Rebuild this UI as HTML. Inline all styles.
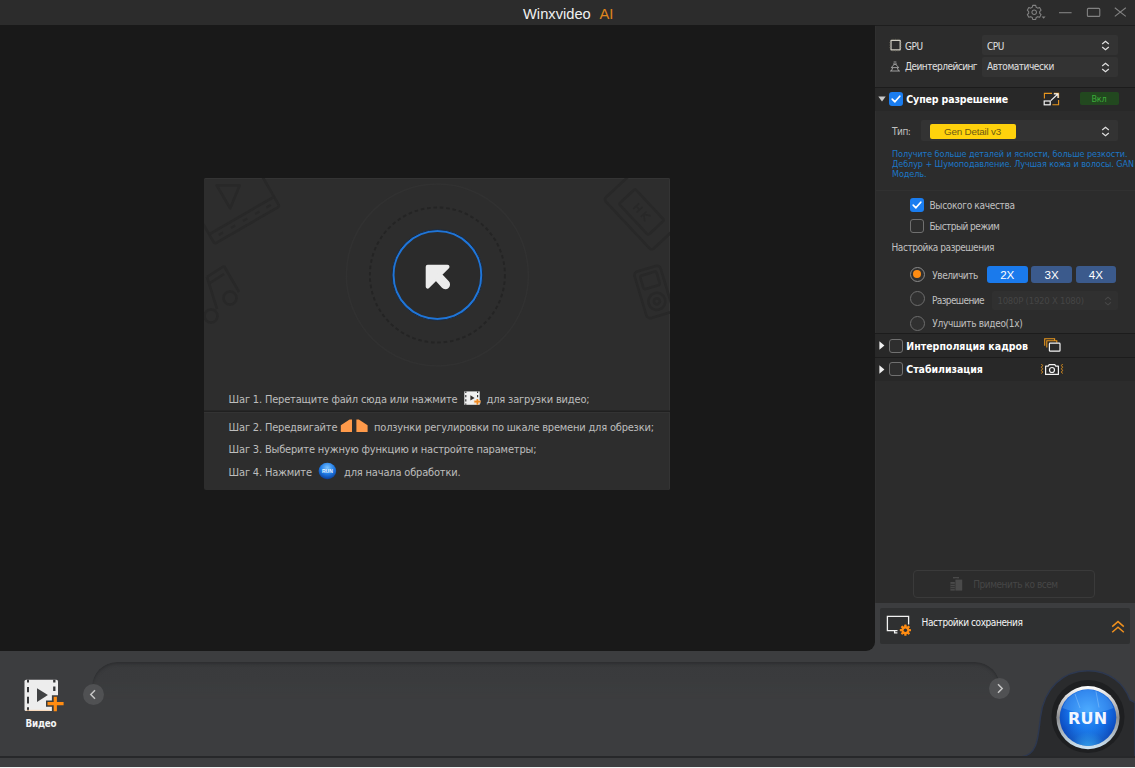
<!DOCTYPE html>
<html lang="ru">
<head>
<meta charset="utf-8">
<title>Winxvideo AI</title>
<style>
*{box-sizing:border-box;margin:0;padding:0}
html,body{width:1135px;height:768px;overflow:hidden}
body{position:relative;background:#3c3d3f;font-family:"Liberation Sans","DejaVu Sans",sans-serif;color:#d6d6d6}
.abs{position:absolute}
.tx{position:absolute;white-space:nowrap;line-height:1}
/* fonts */
.tah{font-family:"DejaVu Sans Condensed","DejaVu Sans","Liberation Sans",sans-serif;font-size:10px;letter-spacing:-0.45px;color:#c0c0c0}
.tahb{font-family:"DejaVu Sans Condensed","DejaVu Sans","Liberation Sans",sans-serif;font-weight:bold;font-size:10.5px;color:#fff}
.step{font-family:"DejaVu Sans Condensed","DejaVu Sans","Liberation Sans",sans-serif;font-size:11px;letter-spacing:-0.18px;color:#bdbdbd}
#title{left:0;top:0;width:1135px;height:25px;background:#2c2c2c}
#main{left:0;top:25px;width:875px;height:626px;background:#191919;border-bottom-right-radius:9px}
#right{left:875px;top:25px;width:260px;height:578px;background:#2c2c2c}
.hdr{left:0;width:260px;background:#282828}
.sep{left:0;width:260px;height:1px;background:#1c1c1c}
.combo{background:#333333;border-radius:2px}
.cb{width:14px;height:14px;border-radius:3px}
.cb.on{background:#1a7df0}
.cb.off{border:1.5px solid #707070;background:#2e2e2e}
.radio{width:15px;height:15px;border-radius:50%;border:1.5px solid #6d6d6d;background:#303030}
.xbtn{height:17px;border-radius:3px;color:#fff;font-size:11.6px;text-align:center;line-height:17.6px;font-family:"Liberation Sans",sans-serif}
</style>
</head>
<body>
<!-- TITLE BAR -->
<div id="title" class="abs">
  <div class="tx" style="left:523px;top:7px;font-size:14.7px;color:#f0f0f0;">Winxvideo</div>
  <div class="tx" style="left:599.5px;top:7px;font-size:14.7px;color:#e0861c;">AI</div>
  <!-- window icons -->
  <svg class="abs" style="left:1026px;top:4px" width="22" height="17" viewBox="0 0 22 17">
    <g transform="translate(8.2,8.2)" fill="none" stroke="#828282" stroke-width="1.05" stroke-linejoin="round">
      <path d="M-1.5 -6.8h3l0.5 1.9l1.5 0.85l1.9 -0.55l1.5 2.6l-1.4 1.35v1.7l1.4 1.35l-1.5 2.6l-1.9 -0.55l-1.5 0.85l-0.5 1.9h-3l-0.5 -1.9l-1.5 -0.85l-1.9 0.55l-1.5 -2.6l1.4 -1.35v-1.7l-1.4 -1.35l1.5 -2.6l1.9 0.55l1.5 -0.85z"/>
      <circle r="2.3"/>
    </g>
    <path d="M15.6 12.6h4L17.6 14.8z" fill="#828282"/>
  </svg>
  <svg class="abs" style="left:1058px;top:4px" width="72" height="17" viewBox="0 0 72 17">
    <path d="M1 8.7h12.6" stroke="#828282" stroke-width="1.1"/>
    <rect x="29.4" y="4.4" width="12.4" height="8" rx="1" fill="none" stroke="#828282" stroke-width="1.1"/>
    <path d="M56.8 3.8l11 8.6M67.8 3.8l-11 8.6" stroke="#828282" stroke-width="1.1"/>
  </svg>
</div>
<!-- MAIN -->
<div id="main" class="abs">
  <!-- drop panel : page coords x204..670, y178..490 ; main offset top 25 -->
  <div id="drop" class="abs" style="left:204px;top:153px;width:466px;height:312px;background:#2d2d2d;border-radius:2px;overflow:hidden;box-shadow:inset 0 1px 0 #343434, inset -1px 0 0 #343434">
    <svg class="abs" style="left:0;top:0" width="466" height="312" viewBox="0 0 466 312">
      <!-- faint decorative glyphs -->
      <g fill="none" stroke="#282828" stroke-width="2.6" stroke-linejoin="round">
        <g transform="translate(10.6,65.8) rotate(-30)">
          <rect x="0" y="-80" width="75" height="80" rx="2"/>
          <path d="M0 -11h75"/>
          <path d="M8 -5.5h5M22 -5.5h5M36 -5.5h5M50 -5.5h5M63 -5.5h5" stroke-width="2.2"/>
        </g>
        <path d="M12.7 7.4H35.6L26.2 30.3Z"/>
        <path d="M20 88L35 114M20 88L3 99M3 99L13 131M20 96L6 105"/>
        <circle cx="26" cy="120" r="6.5"/>
        <circle cx="7" cy="138" r="6.5"/>
        <g transform="translate(437.6,34) rotate(47)">
          <rect x="-35" y="-60" width="70" height="79" rx="3"/>
          <rect x="-21.4" y="-11" width="42.8" height="22" rx="2"/>
          <path d="M-8 -4v8M-8 0h5M-3 -4v8M3 -4v8M3 0l6 -4M3 0l6 4" stroke-width="1.6"/>
        </g>
        <g transform="translate(449.5,113.9) rotate(-16.8)">
          <rect x="-13.6" y="-24.2" width="27.2" height="48.5" rx="4"/>
          <rect x="-8.5" y="-19" width="17" height="14" rx="2"/>
          <circle cx="0.5" cy="10" r="8.5"/>
          <circle cx="0.5" cy="10" r="3"/>
        </g>
      </g>
      <!-- rings : centre page (437.4,275) => local (233.4,97) -->
      <circle cx="233.4" cy="97" r="91" fill="none" stroke="#313131" stroke-width="1.6"/>
      <circle cx="233.4" cy="97" r="67.5" fill="none" stroke="#242424" stroke-width="1.9" stroke-dasharray="3.6 2.8"/>
      <circle cx="233.4" cy="97" r="44.1" fill="#2b2b2b" stroke="#1f75d8" stroke-width="2.4"/>
      <circle cx="233.4" cy="97" r="45.4" fill="none" stroke="#1b2a3f" stroke-width="1"/>
      <!-- arrow -->
      <path d="M223.7 88.8H243.5L223.7 108.6Z" fill="#ececec" stroke="#ececec" stroke-width="4" stroke-linejoin="round"/>
      <path d="M235.5 100.1L241.4 106.5" stroke="#ececec" stroke-width="9.3" stroke-linecap="round" fill="none"/>
      <!-- separator -->
      <rect x="0" y="232.5" width="466" height="1.6" fill="#202020"/>
      <rect x="0" y="234.1" width="466" height="1" fill="#353535"/>
    </svg>
    <!-- steps (page baselines 402.6, 430.4, 452.7, 476) -->
    <div class="tx step" style="left:24.6px;top:215.6px">Шаг 1. Перетащите файл сюда или нажмите</div>
    <div class="tx step" style="left:282.5px;top:215.6px">для загрузки видео;</div>
    <div class="tx step" style="left:24.6px;top:243.9px">Шаг 2. Передвигайте</div>
    <div class="tx step" style="left:170px;top:243.9px;letter-spacing:-0.2px">ползунки регулировки по шкале времени для обрезки;</div>
    <div class="tx step" style="left:24.6px;top:265.7px">Шаг 3. Выберите нужную функцию и настройте параметры;</div>
    <div class="tx step" style="left:24.6px;top:289px">Шаг 4. Нажмите</div>
    <div class="tx step" style="left:140px;top:289px">для начала обработки.</div>
    <!-- step icons -->
    <svg class="abs" style="left:259.5px;top:212.5px" width="19" height="15" viewBox="0 0 19 15">
      <rect x="0.3" y="0.4" width="15.4" height="13.4" fill="#f0f0f0"/>
      <path d="M1.8 0.4v1.6M1.8 3.9v2.4M1.8 8.2v2.4M1.8 12.4v1.4M13.6 0.4v1.6M13.6 3.9v2.4" stroke="#2a2a2a" stroke-width="1.1"/>
      <path d="M6.4 4.2l4.2 2.7l-4.2 2.7z" fill="#35302e"/>
      <path d="M9.8 9h6.6v3.6h-6.6z" fill="#f3d9c0"/>
      <path d="M10.4 10.7h6.2M13.4 8v5.8" stroke="#ef8a22" stroke-width="1.7"/>
    </svg>
    <svg class="abs" style="left:136px;top:241px" width="30" height="14" viewBox="0 0 30 14">
      <path d="M0.8 13V6.2L9.6 0.6H12V13z" fill="#ff9a4a"/>
      <path d="M16.4 13V0.6h2.4L27.6 6.2V13z" fill="#ff9a4a"/>
    </svg>
    <svg class="abs" style="left:114px;top:284px" width="19" height="18" viewBox="0 0 19 18">
      <defs><radialGradient id="sb" cx="50%" cy="30%" r="70%"><stop offset="0" stop-color="#7cc4ff"/><stop offset="0.55" stop-color="#1f7be6"/><stop offset="1" stop-color="#0a3f9a"/></radialGradient></defs>
      <ellipse cx="9.4" cy="9" rx="8.8" ry="8.2" fill="url(#sb)"/>
      <text x="9.4" y="11" font-family="Liberation Sans, sans-serif" font-weight="bold" font-size="5" fill="#e8f4ff" text-anchor="middle">RUN</text>
    </svg>
  </div>
</div>
<!-- RIGHT PANEL -->
<div id="right" class="abs">
  <div class="abs" style="left:0;top:0;width:260px;height:1px;background:#1e1e1e"></div>
  <div class="abs" style="left:0;top:1px;width:1px;height:577px;background:#303030"></div>
  <!-- GPU rows (page y = local+25) -->
  <svg class="abs" style="left:14px;top:12.8px" width="13" height="14" viewBox="0 0 13 14">
    <rect x="2" y="2.4" width="9.2" height="9.4" rx="0.3" fill="none" stroke="#d0cdc2" stroke-width="1.25"/>
    <path d="M4 0.8v1.2M6.5 0.8v1.2M9 0.8v1.2M4 12.2v1.2M6.5 12.2v1.2M9 12.2v1.2M0.3 4.6h1.2M0.3 7.1h1.2M0.3 9.6h1.2M11.5 4.6h1.2M11.5 7.1h1.2M11.5 9.6h1.2" stroke="#6e6a5c" stroke-width="0.7"/>
  </svg>
  <div class="tx tah" style="left:30px;top:16.6px;color:#e0e0e0">GPU</div>
  <div class="abs combo" style="left:107px;top:10px;width:135.5px;height:19.6px"></div>
  <div class="tx tah" style="left:112px;top:16.6px;color:#e0e0e0">CPU</div>
  <svg class="abs" style="left:13.8px;top:36px" width="12" height="12" viewBox="0 0 12 12">
    <path d="M4.6 1h2.8M4 3h4M2.6 6.2L5.2 3.4h1.6L9.4 6.2M2 6.6h8M1 10h10M2.4 10L3.6 7M9.6 10L8.4 7" stroke="#a8a8a8" stroke-width="0.9" fill="none"/>
  </svg>
  <div class="tx tah" style="left:30px;top:37.3px;color:#e0e0e0;letter-spacing:-0.52px">Деинтерлейсинг</div>
  <div class="abs combo" style="left:107px;top:32px;width:135.5px;height:20px"></div>
  <div class="tx tah" style="left:112px;top:37.3px;color:#e0e0e0">Автоматически</div>
  <svg class="abs" style="left:225.5px;top:15px" width="9" height="11" viewBox="0 0 9 11"><path d="M1.2 4L4.5 1.2L7.8 4M1.2 7L4.5 9.8L7.8 7" fill="none" stroke="#e0e0e0" stroke-width="1.2"/></svg>
  <svg class="abs" style="left:225.5px;top:37px" width="9" height="11" viewBox="0 0 9 11"><path d="M1.2 4L4.5 1.2L7.8 4M1.2 7L4.5 9.8L7.8 7" fill="none" stroke="#e0e0e0" stroke-width="1.2"/></svg>

  <!-- Section 1 header: page y 87..110 -->
  <div class="abs sep" style="top:62px"></div>
  <div class="abs hdr" style="top:63px;height:23px"></div>
  <svg class="abs" style="left:3px;top:70.5px" width="8" height="6" viewBox="0 0 8 6"><path d="M0.3 0.5h7.4L4 5.4z" fill="#c8c8c8"/></svg>
  <div class="abs cb on" style="left:14px;top:67px"></div>
  <svg class="abs" style="left:14px;top:67px" width="14" height="14" viewBox="0 0 14 14"><path d="M3.2 7.2L5.9 9.8L10.8 4.2" fill="none" stroke="#fff" stroke-width="1.7" stroke-linecap="round" stroke-linejoin="round"/></svg>
  <div class="tx tahb" style="left:31.3px;top:69.3px;letter-spacing:-0.13px">Супер разрешение</div>
  <svg class="abs" style="left:168px;top:67px" width="17" height="14" viewBox="0 0 17 14">
    <path d="M1.4 6.4V1.4H9M11 1.4h4.6V6M15.6 8v4.8H9.4" fill="none" stroke="#e8961e" stroke-width="1.1"/>
    <rect x="1.2" y="9" width="6" height="3.8" fill="none" stroke="#f2f2f2" stroke-width="1.2"/>
    <path d="M7.8 8.6L14.6 2.2M10.8 1.8h4.2v4.2" fill="none" stroke="#f2f2f2" stroke-width="1.2"/>
  </svg>
  <div class="abs" style="left:205px;top:67.2px;width:39px;height:12.6px;background:#22481f;border-radius:2px"></div>
  <div class="tx" style="left:216.5px;top:70.4px;font-size:9px;letter-spacing:-0.2px;color:#3dac3a;font-family:'DejaVu Sans Condensed','Liberation Sans',sans-serif">Вкл</div>

  <!-- Type row -->
  <div class="tx tah" style="left:17px;top:102.2px">Тип:</div>
  <div class="abs combo" style="left:45.5px;top:95px;width:197.3px;height:21px"></div>
  <div class="abs" style="left:54.5px;top:98.5px;width:86px;height:15.5px;background:#ffd20c;border-radius:2px"></div>
  <div class="tx" style="left:69px;top:102px;font-size:9.9px;letter-spacing:-0.22px;color:#6e5a12;font-family:'Liberation Sans',sans-serif">Gen Detail v3</div>
  <svg class="abs" style="left:225.5px;top:100.5px" width="9" height="11" viewBox="0 0 9 11"><path d="M1.2 4L4.5 1.2L7.8 4M1.2 7L4.5 9.8L7.8 7" fill="none" stroke="#e0e0e0" stroke-width="1.2"/></svg>
  <div class="abs" style="left:17px;top:123.9px;width:243px;font-family:'DejaVu Sans Condensed','Liberation Sans',sans-serif;font-size:9px;line-height:10px;letter-spacing:-0.08px;color:#1c77c6;white-space:nowrap">Получите больше деталей и ясности, больше резкости.<br>Деблур + Шумоподавление. Лучшая кожа и волосы. GAN<br>Модель.</div>
  <div class="abs" style="left:1px;top:165px;width:259px;height:1px;background:#313131"></div>

  <!-- options -->
  <div class="abs cb on" style="left:34.5px;top:173px"></div>
  <svg class="abs" style="left:34.5px;top:173px" width="14" height="14" viewBox="0 0 14 14"><path d="M3.2 7.2L5.9 9.8L10.8 4.2" fill="none" stroke="#fff" stroke-width="1.7" stroke-linecap="round" stroke-linejoin="round"/></svg>
  <div class="tx tah" style="left:54.5px;top:175.6px;letter-spacing:-0.32px">Высокого качества</div>
  <div class="abs cb off" style="left:34.5px;top:193.5px"></div>
  <div class="tx tah" style="left:54.5px;top:197px;letter-spacing:-0.55px">Быстрый режим</div>
  <div class="tx tah" style="left:16.5px;top:217.5px">Настройка разрешения</div>

  <div class="abs radio" style="left:34.5px;top:241.5px;border-color:#8a8a8a"></div>
  <div class="abs" style="left:38px;top:245px;width:8px;height:8px;border-radius:50%;background:#ff8c12"></div>
  <div class="tx tah" style="left:57.3px;top:245.7px">Увеличить</div>
  <div class="abs xbtn" style="left:112px;top:240.7px;width:40.5px;background:#1a7aec">2X</div>
  <div class="abs xbtn" style="left:156.3px;top:240.7px;width:40.5px;background:#3b5a8c">3X</div>
  <div class="abs xbtn" style="left:200.6px;top:240.7px;width:40.5px;background:#3b5a8c">4X</div>

  <div class="abs radio" style="left:34.5px;top:266.3px"></div>
  <div class="tx tah" style="left:57px;top:270.6px;letter-spacing:-0.62px">Разрешение</div>
  <div class="abs" style="left:117.3px;top:266px;width:125.5px;height:19px;background:#303030;border-radius:2px"></div>
  <div class="tx" style="left:122.5px;top:271px;font-size:9.5px;letter-spacing:-0.25px;color:#454545;font-family:'DejaVu Sans Condensed','Liberation Sans',sans-serif">1080P (1920 X 1080)</div>
  <svg class="abs" style="left:229px;top:270.5px" width="8" height="10" viewBox="0 0 9 11"><path d="M1.2 4L4.5 1.2L7.8 4M1.2 7L4.5 9.8L7.8 7" fill="none" stroke="#484848" stroke-width="1.2"/></svg>
  <div class="abs radio" style="left:34.5px;top:290.5px"></div>
  <div class="tx tah" style="left:57.3px;top:294.2px;letter-spacing:-0.32px">Улучшить видео(1x)</div>

  <!-- Section 2 header page y 333..357 -->
  <div class="abs sep" style="top:308px"></div>
  <div class="abs hdr" style="top:309px;height:23px"></div>
  <svg class="abs" style="left:4px;top:316px" width="6" height="9" viewBox="0 0 6 9"><path d="M0.4 0.3v8.4L5.4 4.5z" fill="#f0f0f0"/></svg>
  <div class="abs cb off" style="left:14px;top:313.5px"></div>
  <div class="tx tahb" style="left:31.3px;top:316.2px">Интерполяция кадров</div>
  <svg class="abs" style="left:169px;top:313px" width="17" height="14" viewBox="0 0 17 14">
    <path d="M0.7 7.8V0.7H10.6V2.6M2.8 9.4V2.8H12.8V4.8" fill="none" stroke="#e8961e" stroke-width="1.1"/>
    <rect x="5.4" y="5.2" width="10.6" height="8" rx="0.8" fill="#2a2a2a" stroke="#f2f2f2" stroke-width="1.2"/>
  </svg>
  <!-- Section 3 header page y 357..381 -->
  <div class="abs sep" style="top:332px"></div>
  <div class="abs hdr" style="top:333px;height:23px"></div>
  <svg class="abs" style="left:4px;top:340px" width="6" height="9" viewBox="0 0 6 9"><path d="M0.4 0.3v8.4L5.4 4.5z" fill="#f0f0f0"/></svg>
  <div class="abs cb off" style="left:14px;top:337px"></div>
  <div class="tx tahb" style="left:31.3px;top:339px;letter-spacing:-0.05px">Стабилизация</div>
  <svg class="abs" style="left:165px;top:337.5px" width="24" height="13" viewBox="0 0 24 13">
    <path d="M1.4 1l1.2 1.6l-1.2 1.6l1.2 1.6l-1.2 1.6l1.2 1.6l-1.2 1.6M22.6 1l-1.2 1.6l1.2 1.6l-1.2 1.6l1.2 1.6l-1.2 1.6l1.2 1.6" fill="none" stroke="#e8961e" stroke-width="0.9"/>
    <path d="M5.6 3.2h2.6l1-1.6h5.6l1 1.6h2.6v8.2H5.6z" fill="none" stroke="#f2f2f2" stroke-width="1.2" stroke-linejoin="round"/>
    <circle cx="12" cy="7" r="2.5" fill="none" stroke="#f2f2f2" stroke-width="1.2"/>
  </svg>

  <!-- apply to all : page x913..1095, y570..598 -->
  <div class="abs" style="left:38.3px;top:545px;width:182px;height:28px;border:1px solid #3a3a3a;border-radius:4px;background:#2c2c2c"></div>
  <svg class="abs" style="left:75px;top:552px" width="13" height="14" viewBox="0 0 13 14">
    <path d="M3 0.6h6M4 0v1.6M8 0v1.6" stroke="#4a4a4a" stroke-width="1.2"/>
    <rect x="5.4" y="2.6" width="6.8" height="11" fill="#4a4a4a"/>
    <rect x="0.4" y="5" width="4.4" height="8.6" fill="#4a4a4a"/>
    <path d="M0.4 7.4h4.4M0.4 9.6h4.4M0.4 11.6h4.4" stroke="#2c2c2c" stroke-width="0.8"/>
  </svg>
  <div class="tx" style="left:98.2px;top:554.6px;font-size:10px;letter-spacing:-0.45px;color:#464646;font-family:'DejaVu Sans Condensed','Liberation Sans',sans-serif">Применить ко всем</div>
</div>
<!-- SAVE SETTINGS : page x880..1129.5, y608.5..644 -->
<div class="abs" style="left:880px;top:607.8px;width:249.5px;height:36.4px;background:#2f3031;border-radius:2px"></div>
<svg class="abs" style="left:886px;top:615px" width="27" height="22" viewBox="0 0 27 22">
  <path d="M11.5 15.6H1.4V1.4H22.6V9.5" fill="none" stroke="#f2f2f2" stroke-width="1.3"/>
  <path d="M8.6 15.6v2.2h2.8" fill="none" stroke="#f2f2f2" stroke-width="1.3"/>
  <g transform="translate(19.4,15.2) scale(0.9)" fill="#ff8c12">
    <circle r="4.3"/>
    <g><rect x="-1.3" y="-6.2" width="2.6" height="12.4" rx="0.6"/><rect x="-1.3" y="-6.2" width="2.6" height="12.4" rx="0.6" transform="rotate(45)"/><rect x="-1.3" y="-6.2" width="2.6" height="12.4" rx="0.6" transform="rotate(90)"/><rect x="-1.3" y="-6.2" width="2.6" height="12.4" rx="0.6" transform="rotate(135)"/></g>
    <circle r="1.9" fill="#2e2f30"/>
  </g>
</svg>
<div class="tx" style="left:921.6px;top:618.2px;font-size:10px;letter-spacing:-0.42px;color:#f4f4f4;font-family:'DejaVu Sans Condensed','Liberation Sans',sans-serif">Настройки сохранения</div>
<svg class="abs" style="left:1110.5px;top:619.5px" width="14" height="14" viewBox="0 0 14 14"><path d="M1.2 6.6L7 1.6L12.8 6.6M1.2 12.2L7 7.2L12.8 12.2" fill="none" stroke="#f0901e" stroke-width="1.5"/></svg>

<!-- BOTTOM -->
<div id="bottom" class="abs" style="left:0;top:651px;width:1135px;height:117px">
  <!-- timeline track: page top y=662 -->
  <div class="abs" style="left:91.5px;top:11px;width:908.5px;height:60px;border-radius:25px 25px 0 0;background:linear-gradient(#393a3c,#3b3c3e 60%,#3c3d3f);box-shadow:inset 0 2px 3px #2d2e30;-webkit-mask-image:linear-gradient(#000 28%,rgba(0,0,0,0) 62%);mask-image:linear-gradient(#000 28%,rgba(0,0,0,0) 62%)"></div>
  <!-- video button -->
  <svg class="abs" style="left:24px;top:27.5px" width="42" height="34" viewBox="0 0 42 34">
    <rect x="0.5" y="0.8" width="33.5" height="31.3" rx="1.6" fill="#ededed"/>
    <path d="M4 0.8v2.8M4 8v5.3M4 17.7v6.9M4 28.2v3.9" stroke="#343537" stroke-width="2"/>
    <path d="M30.3 0.8v2.8M30.3 7.6v4.5" stroke="#343537" stroke-width="2.3"/>
    <path d="M13 9.2L23.9 16.1L13 23z" fill="#404143"/>
    <path d="M2 31.4h24" stroke="#ffd2a8" stroke-width="1.2" opacity="0.7"/>
    <path d="M22 21.4h20v6.4h-20zM27.9 16.2h6.8v17h-6.8z" fill="#3c3d3f"/>
    <path d="M23.5 24.6h16.1M31.3 17.7v14.6" stroke="#ff8c12" stroke-width="3.2"/>
  </svg>
  <div class="tx" style="left:25.6px;top:67.5px;font-family:'DejaVu Sans Condensed','Liberation Sans',sans-serif;font-weight:bold;font-size:9.8px;letter-spacing:-0.25px;color:#f4f4f4">Видео</div>
  <!-- arrows -->
  <div class="abs" style="left:83px;top:32.5px;width:21px;height:21px;border-radius:50%;background:#505153"></div>
  <svg class="abs" style="left:83px;top:32.5px" width="21" height="21" viewBox="0 0 21 21"><path d="M12 6.2L7.8 10.5L12 14.8" fill="none" stroke="#c6c6c6" stroke-width="1.5"/></svg>
  <div class="abs" style="left:989px;top:27px;width:21px;height:21px;border-radius:50%;background:#505153"></div>
  <svg class="abs" style="left:989px;top:27px" width="21" height="21" viewBox="0 0 21 21"><path d="M9 6.2L13.2 10.5L9 14.8" fill="none" stroke="#c6c6c6" stroke-width="1.5"/></svg>
  <!-- RUN bump + button : centre page (1088,717.5) => local (1088,66.5) -->
  <svg class="abs" style="left:1000px;top:10px" width="135" height="97" viewBox="0 0 135 97">
    <defs>
      <radialGradient id="rb" cx="50%" cy="38%" r="62%"><stop offset="0" stop-color="#3aa0ff"/><stop offset="0.55" stop-color="#156fe8"/><stop offset="1" stop-color="#0a3fb0"/></radialGradient>
      <radialGradient id="rg" cx="50%" cy="108%" r="55%"><stop offset="0" stop-color="#3fc0ff" stop-opacity="0.85"/><stop offset="0.6" stop-color="#3fc0ff" stop-opacity="0.15"/><stop offset="1" stop-color="#3fc0ff" stop-opacity="0"/></radialGradient>
      <linearGradient id="rr" x1="0" y1="0" x2="0" y2="1"><stop offset="0" stop-color="#ffffff"/><stop offset="0.5" stop-color="#8e8e90"/><stop offset="1" stop-color="#cfe6f6"/></linearGradient>
    </defs>
    <path d="M21 96 C38 94 38 76 40.5 56 C44 27 63 9.8 88 9.8 C109 9.8 124 22 130 39 L135 41.5 V96 Z" fill="#2a2b2d" stroke="#2d3850" stroke-width="1.4"/>
    <circle cx="88" cy="55.5" r="36.5" fill="#1e1f21"/>
    <circle cx="88" cy="56.6" r="31.6" fill="url(#rr)"/>
    <circle cx="88" cy="56.6" r="28.3" fill="url(#rb)"/>
    <circle cx="88" cy="56.6" r="28.3" fill="url(#rg)"/>
    <path d="M62.5 47 A27 27 0 0 1 113.5 47 Q88 57.5 62.5 47z" fill="#7cc8ff" opacity="0.3"/>
    <path d="M75 33l5 14M96 30.5l3 16" stroke="#bfe4ff" stroke-width="0.7" opacity="0.45"/>
    <text x="87.6" y="62.6" text-anchor="middle" font-family="DejaVu Sans, Liberation Sans, sans-serif" font-weight="bold" font-size="16" letter-spacing="0.2" fill="#f2f6ff">RUN</text>
  </svg>
  <!-- bottom lines -->
  <div class="abs" style="left:0;top:105px;width:1135px;height:2px;background:#27282a"></div>
  <div class="abs" style="left:0;top:107px;width:1135px;height:9px;background:#3d3e40"></div>
  <div class="abs" style="left:0;top:116px;width:1135px;height:1px;background:#f2f2f2"></div>
</div>
</body>
</html>
